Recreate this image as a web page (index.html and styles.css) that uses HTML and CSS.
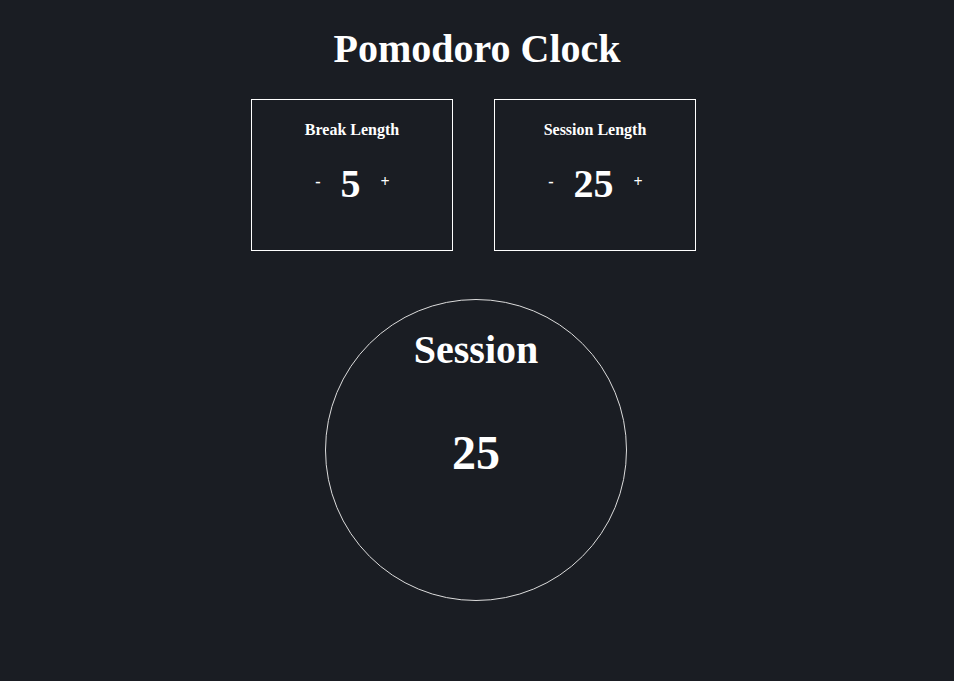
FILE: index.html
```html
<!DOCTYPE html>
<html>
<head>
<meta charset="utf-8">
<title>Pomodoro Clock</title>
<link rel="stylesheet" href="styles.css">
</head>
<body>
  <h1 class="title">Pomodoro Clock</h1>
  <div class="controls">
    <div class="panel">
      <div class="label">Break Length</div>
      <div class="adjust">
        <button class="btn">-</button>
        <span class="value">5</span>
        <button class="btn">+</button>
      </div>
    </div>
    <div class="panel">
      <div class="label">Session Length</div>
      <div class="adjust">
        <button class="btn">-</button>
        <span class="value">25</span>
        <button class="btn">+</button>
      </div>
    </div>
  </div>
  <div class="timer">
    <div class="timer-label">Session</div>
    <div class="timer-time">25</div>
  </div>
</body>
</html>
```
FILE: styles.css
```css
html, body {
  background: #1a1d23;
}
body {
  margin: 0;
  padding: 0 8px;
  color: #ffffff;
  font-family: "Liberation Serif", "Times New Roman", serif;
}
.title {
  margin: 0;
  padding-top: 26px;
  font-size: 40px;
  line-height: 46px;
  font-weight: bold;
  text-align: center;
}
.controls {
  display: flex;
  justify-content: center;
  gap: 41px;
  margin-top: 27px;
  padding-right: 7px;
}
.panel {
  width: 200px;
  border: 1px solid #ffffff;
  padding-top: 21px;
  box-sizing: content-box;
  height: 129px;
}
.label {
  font-size: 16px;
  line-height: 18px;
  font-weight: bold;
  text-align: center;
}
.adjust {
  display: flex;
  justify-content: center;
  align-items: center;
  gap: 20px;
  margin-top: 22px;
  padding-left: 1px;
}
.btn {
  background: transparent;
  border: none;
  padding: 0;
  margin: 0;
  color: #ffffff;
  font-family: "Liberation Serif", "Times New Roman", serif;
  font-size: 16px;
  font-weight: bold;
  line-height: 18px;
  position: relative;
  top: -2px;
}
.value {
  font-size: 40px;
  line-height: 46px;
  font-weight: bold;
}
.timer {
  width: 300px;
  height: 300px;
  border: 1px solid #dcdcdc;
  border-radius: 50%;
  margin: 48px auto 0;
  text-align: center;
  box-sizing: content-box;
  position: relative;
  left: -1px;
}
.timer-label {
  padding-top: 27px;
  font-size: 40px;
  line-height: 46px;
  font-weight: bold;
}
.timer-time {
  margin-top: 52px;
  font-size: 48px;
  line-height: 55px;
  font-weight: bold;
}
```
